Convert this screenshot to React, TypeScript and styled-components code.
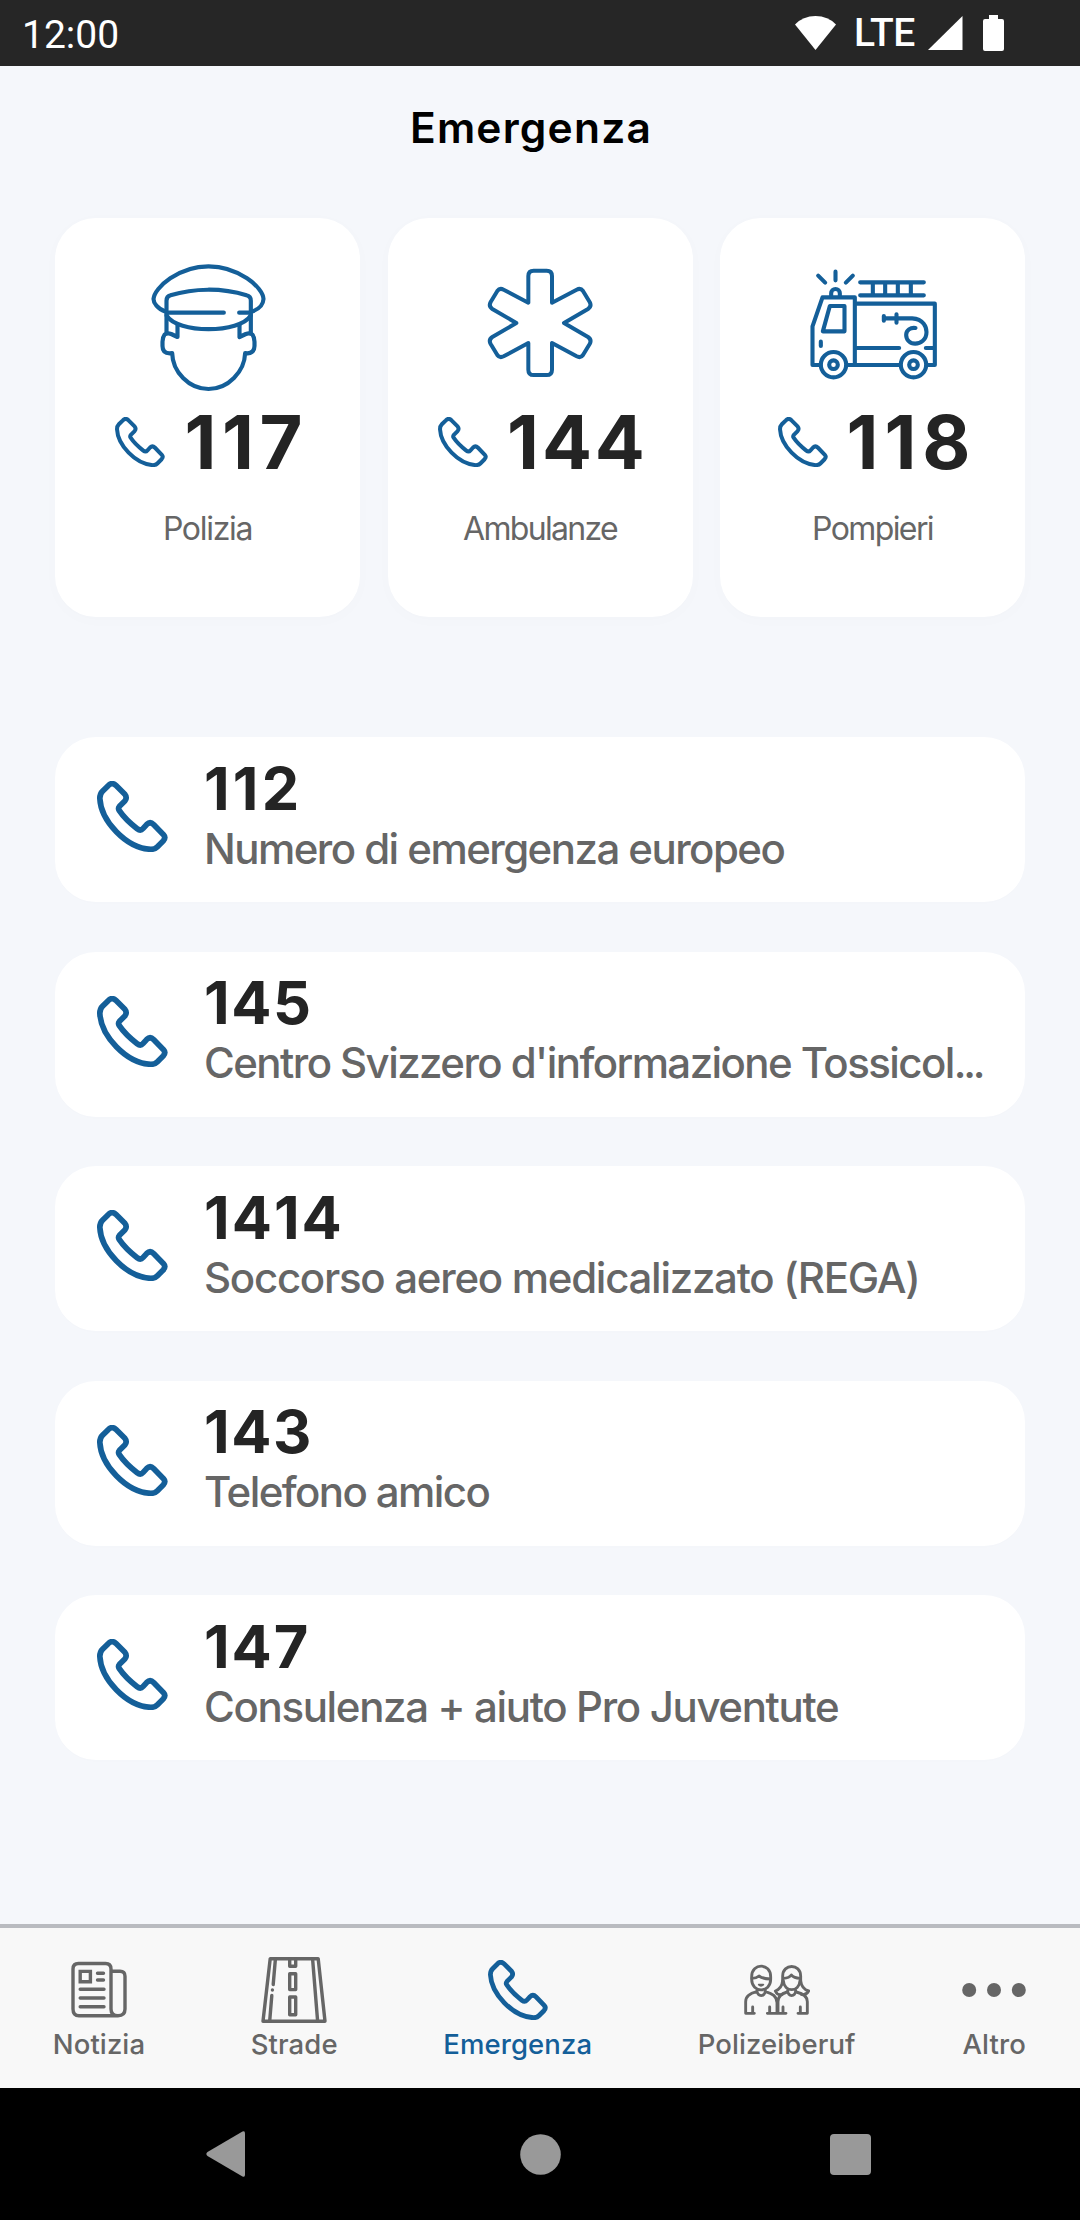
import React from "react";
import styled, { createGlobalStyle } from "styled-components";

const BLUE = "#145f99";
const GREY = "#666666";
const INK = "#242424";

const GlobalStyle = createGlobalStyle`
  * { box-sizing: border-box; }
  body { margin: 0; background: #f5f7fb; }
`;

const Screen = styled.div`
  width: 1080px;
  height: 2220px;
  display: flex;
  flex-direction: column;
  overflow: hidden;
  background: #f5f7fb;
  font-family: Inter, "Liberation Sans", sans-serif;
`;

const StatusBar = styled.div`
  height: 66px;
  flex: none;
  display: flex;
  align-items: center;
  justify-content: space-between;
  padding: 0 76px 0 22px;
  background: #262626;
  color: #fff;
  font: 400 39px/66px Roboto, sans-serif;
`;

const Clock = styled.span`
  padding-top: 3px;
`;

const StatusIcons = styled.div`
  display: flex;
  align-items: center;
`;

const NetworkType = styled.span`
  margin: 0 13px 0 18px;
  padding-bottom: 1px;
  font-weight: 500;
  letter-spacing: -0.4px;
`;

const BatterySvg = styled.svg`
  margin-left: 20px;
`;

const Header = styled.header`
  height: 123px;
  flex: none;
  display: flex;
  align-items: center;
  justify-content: center;
  padding-right: 18px;
`;

const Title = styled.h1`
  margin: 0;
  color: #000;
  font-size: 42.5px;
  font-weight: 600;
  line-height: 52px;
  letter-spacing: 1.2px;
`;

const Content = styled.main`
  flex: 1;
  padding: 29px 55px 0;
  display: flex;
  flex-direction: column;
  gap: 120px;
`;

const CardGrid = styled.div`
  display: grid;
  grid-template-columns: repeat(3, 1fr);
  gap: 27.5px;
`;

const Card = styled.div`
  height: 399px;
  padding-top: 46px;
  display: flex;
  flex-direction: column;
  align-items: center;
  border-radius: 41px;
  background: #fff;
  box-shadow: 0 3px 18px rgba(30, 30, 80, 0.015);
`;

const CardNumberRow = styled.div`
  height: 74px;
  margin-top: 13px;
  display: flex;
  align-items: center;
  gap: 19px;
`;

const CardNumber = styled.span<{ $tracking: number }>`
  color: ${INK};
  font-size: 74px;
  font-weight: 700;
  line-height: 74px;
  letter-spacing: ${(p) => p.$tracking}px;
  margin-right: ${(p) => -p.$tracking - 3}px;
`;

const CardLabel = styled.span<{ $tracking: number }>`
  margin-top: 30px;
  color: ${GREY};
  font-size: 32px;
  line-height: 40px;
  letter-spacing: ${(p) => p.$tracking}px;
`;

const List = styled.div`
  display: flex;
  flex-direction: column;
  gap: 49.5px;
`;

const Row = styled.div`
  height: 165px;
  padding: 20.5px 30px 0 42px;
  display: flex;
  gap: 36px;
  border-radius: 41px;
  background: #fff;
  box-shadow: 0 2px 14px rgba(30, 30, 80, 0.008);
`;

const RowIcon = styled.div`
  flex: none;
  padding-top: 23.5px;
`;

const RowText = styled.div`
  display: flex;
  flex-direction: column;
  gap: 6px;
  white-space: nowrap;
`;

const RowNumber = styled.span<{ $tracking: number }>`
  color: ${INK};
  font-size: 59.5px;
  font-weight: 700;
  font-kerning: none;
  line-height: 60px;
  letter-spacing: ${(p) => p.$tracking}px;
`;

const RowLabel = styled.span<{ $tracking: number }>`
  color: ${GREY};
  font-size: 42px;
  font-weight: 500;
  line-height: 50px;
  letter-spacing: ${(p) => p.$tracking}px;
`;

const Ellipsis = styled.span`
  letter-spacing: -3.2px;
`;

const TabBar = styled.nav`
  height: 164px;
  flex: none;
  display: flex;
  justify-content: space-around;
  padding-top: 29px;
  border-top: 4px solid #b9bbc0;
  background: #f8f8f8;
`;

const Tab = styled.div<{ $active?: boolean }>`
  display: flex;
  flex-direction: column;
  align-items: center;
  gap: 6px;
  color: ${(p) => (p.$active ? BLUE : GREY)};
`;

const TabIcon = styled.div`
  width: 66px;
  height: 66px;
  display: flex;
  align-items: center;
  justify-content: center;
`;

const TabLabel = styled.span`
  font-size: 27.5px;
  font-weight: 500;
  line-height: 30px;
  letter-spacing: 0.1px;
`;

const SystemNav = styled.div`
  height: 132px;
  flex: none;
  display: flex;
  align-items: center;
  justify-content: space-between;
  padding: 0 209px 0 206px;
  background: #000;
  color: #999;
`;

const PhoneIcon = ({ size, color = "currentColor" }: { size: number; color?: string }) => (
  <svg width={size} height={size} viewBox="172 183 212 213" fill="none" stroke={color} strokeWidth="17" strokeLinejoin="round">
    <path d="M205 197L188 214Q180 222 180 235C183 302 258 384 333 388Q345 388 352 381L370 363Q379 353 371 344L342 314Q331 303 321 313L310 325Q302 334 292 326C270 309 250 289 238 271Q234 265 239 259L255 243Q263 233 255 223L228 196Q216 185 205 197Z" />
  </svg>
);

const PoliceIcon = () => (
  <svg width="128" height="128" viewBox="310.5 192 384 384" fill="none" stroke={BLUE} strokeWidth="12.5" strokeLinecap="round" strokeLinejoin="round">
    <path d="M376 335C350 326 339 308 339 297C342 262 415 199 504 199C593 199 668 262 669 297C668 315 655 328 633 335" />
    <path d="M378 398V302Q378 289 390 286C460 264 545 263 618 286Q631 289 631 302V398" />
    <path d="M384 338H550M596 338H626" />
    <path d="M378 346C410 401 598 401 631 346" />
    <path d="M411 375V411L392 402Q380 398 372 404Q366 412 366 425V438Q366 460 388 460L395 459C396 515 445 567 504 567C563 567 612 515 614 459L621 460Q642 458 642 438V425Q642 412 636 404Q628 398 616 402L597 411V375" />
  </svg>
);

const AmbulanceIcon = () => (
  <svg width="128" height="128" viewBox="288 192 384 384" fill="none" stroke={BLUE} strokeWidth="12" strokeLinejoin="round">
    <path d="M445 308V228Q445 212 461 212H500Q516 212 516 228V308L590 269Q602 263 609 273L629 306Q636 319 624 327L552 369L624 411Q636 419 629 432L609 465Q602 475 590 469L516 429V509Q516 525 500 525H461Q445 525 445 509V429L371 469Q359 475 352 465L332 432Q325 419 337 411L409 369L337 327Q325 319 332 306L352 273Q359 263 371 269Z" />
  </svg>
);

const FireTruckIcon = () => (
  <svg width="128" height="128" viewBox="295.5 192 384 384" fill="none" stroke={BLUE} strokeWidth="12.3" strokeLinecap="round" strokeLinejoin="round">
    <path d="M330 495H306V379L336 292H433V493" />
    <path d="M358 318H402V394H337Z" />
    <path d="M362 287V280a13 13 0 0 1 26 0V287" />
    <path d="M375 215V241M323 227L344 248M427 227L406 248" />
    <path d="M331 425V438" />
    <path d="M449 247H640M449 286H640M487 247V286M524 247V286M562 247V286M601 247V286" />
    <path d="M439 311H673V495H652M411 495H568M439 444H566M646 444H667" />
    <circle cx="369" cy="494" r="38" />
    <circle cx="369" cy="494" r="13" />
    <circle cx="609" cy="494" r="38" />
    <circle cx="609" cy="494" r="13" />
    <path d="M520 348V362M558 343V368M520 355H605C640 357 648 382 648 396C648 420 630 431 614 431C598 431 587 419 587 405C587 390 600 382 615 384" />
  </svg>
);

const NewsIcon = () => (
  <svg width="66" height="66" viewBox="0 0 66 66" fill="none" stroke="currentColor" strokeWidth="3.4" strokeLinecap="round" strokeLinejoin="round">
    <path d="M45 14.3H54Q59 14.3 59 19.3V52Q59 58.7 52 58.7H13Q7 58.7 7 52V12Q7 6.5 12.5 6.5H39.5Q45 6.5 45 12V52Q45 58.7 52 58.7" />
    <path d="M14.2 14.4H24.4V24.8H14.2Z" strokeLinejoin="miter" />
    <path d="M31.5 16.3H37.5M31.5 23H37.5M14.2 32.3H38M14.2 41H38M14.2 49.7H38" />
  </svg>
);

const RoadIcon = () => (
  <svg width="66" height="66" viewBox="0 0 66 66" fill="none" stroke="currentColor" strokeWidth="3.4" strokeLinecap="round" strokeLinejoin="round">
    <path d="M9.2 1.8H57.2L64 64.3H2Z" />
    <path d="M14.4 2L12.2 27.5M11.4 33V33.1M10.8 38.5L8.7 64M51.6 2L56.6 64" />
    <path d="M28.7 2V9.3H34.7V2M28.7 16.8H34.7V32.6H28.7ZM28.7 40H34.7V57.8H28.7Z" />
  </svg>
);

const PeopleIcon = () => (
  <svg width="66" height="66" viewBox="72 51 198 198" fill="none" stroke="currentColor" strokeWidth="8.6" strokeLinecap="round" strokeLinejoin="round">
    <path d="M95 110C95 68 152 68 152 110V118C152 160 95 160 95 118Z" />
    <path d="M96 115Q109 115 117 108Q129 117 151 117" />
    <path d="M116 134Q123 141 130 134Z" strokeWidth="5" />
    <path d="M111 151C111 172 136 172 136 151M110 155C89 161 77 168 77 185V220H103M98 219V201M137 155C157 161 170 168 171 188V220M168 220H142M149 219V201" />
    <path d="M188 122V108C188 70 242 70 242 108V122M190 122C192 158 238 158 240 122" />
    <path d="M190 115Q208 114 214 105Q222 114 240 115" />
    <path d="M188 122C186 140 178 149 166 153Q172 167 186 163M242 122C244 140 252 149 266 153Q258 167 244 163" />
    <path d="M203 151C203 172 227 172 227 151M201 156C184 161 174 168 174 185V220H198M189 219V201M229 156C250 161 262 168 262 185V220H234M241 219V201" />
  </svg>
);

const MoreIcon = () => (
  <svg width="66" height="66" viewBox="0 0 66 66" fill="currentColor">
    <circle cx="8.2" cy="33" r="7" />
    <circle cx="33" cy="33" r="7" />
    <circle cx="57.8" cy="33" r="7" />
  </svg>
);

const cards = [
  { number: "117", tracking: 5.6, label: "Polizia", labelTracking: -1.3, icon: <PoliceIcon /> },
  { number: "144", tracking: 2.9, label: "Ambulanze", labelTracking: -1.7, icon: <AmbulanceIcon /> },
  { number: "118", tracking: 6, label: "Pompieri", labelTracking: -1.6, icon: <FireTruckIcon /> },
];

const contacts = [
  { number: "112", tracking: 3.2, label: "Numero di emergenza europeo", labelTracking: -1.55 },
  { number: "145", tracking: 1.6, label: "Centro Svizzero d'informazione Tossicol", labelTracking: -1.57, cut: true },
  { number: "1414", tracking: 2, label: "Soccorso aereo medicalizzato (REGA)", labelTracking: -1.28 },
  { number: "143", tracking: 1.6, label: "Telefono amico", labelTracking: -1.58 },
  { number: "147", tracking: 1.9, label: "Consulenza + aiuto Pro Juventute", labelTracking: -1.35 },
];

const tabs = [
  { label: "Notizia", icon: <NewsIcon /> },
  { label: "Strade", icon: <RoadIcon /> },
  { label: "Emergenza", icon: <PhoneIcon size={60} />, active: true },
  { label: "Polizeiberuf", icon: <PeopleIcon /> },
  { label: "Altro", icon: <MoreIcon /> },
];

export default function App() {
  return (
    <Screen>
      <GlobalStyle />
      <StatusBar>
        <Clock>12:00</Clock>
        <StatusIcons>
          <svg width="41" height="34" viewBox="0 0 41 34" fill="#fff">
            <path d="M20.5 34L0 8.5Q8 0 20.5 0T41 8.5Z" />
          </svg>
          <NetworkType>LTE</NetworkType>
          <svg width="35" height="34" viewBox="0 0 35 34" fill="#fff">
            <path d="M34.5 0V34H0Z" />
          </svg>
          <BatterySvg width="21" height="36" viewBox="0 0 21 36" fill="#fff">
            <path d="M6 0H15V4H19Q21 4 21 6V34Q21 36 19 36H2Q0 36 0 34V6Q0 4 2 4H6Z" />
          </BatterySvg>
        </StatusIcons>
      </StatusBar>
      <Header>
        <Title>Emergenza</Title>
      </Header>
      <Content>
        <CardGrid>
          {cards.map((c) => (
            <Card key={c.number}>
              {c.icon}
              <CardNumberRow>
                <PhoneIcon size={50} color={BLUE} />
                <CardNumber $tracking={c.tracking}>{c.number}</CardNumber>
              </CardNumberRow>
              <CardLabel $tracking={c.labelTracking}>{c.label}</CardLabel>
            </Card>
          ))}
        </CardGrid>
        <List>
          {contacts.map((c) => (
            <Row key={c.number}>
              <RowIcon>
                <PhoneIcon size={71} color={BLUE} />
              </RowIcon>
              <RowText>
                <RowNumber $tracking={c.tracking}>{c.number}</RowNumber>
                <RowLabel $tracking={c.labelTracking}>
                  {c.label}
                  {c.cut && <Ellipsis>...</Ellipsis>}
                </RowLabel>
              </RowText>
            </Row>
          ))}
        </List>
      </Content>
      <TabBar>
        {tabs.map((t) => (
          <Tab key={t.label} $active={t.active}>
            <TabIcon>{t.icon}</TabIcon>
            <TabLabel>{t.label}</TabLabel>
          </Tab>
        ))}
      </TabBar>
      <SystemNav>
        <svg width="44" height="46" viewBox="0 0 44 46" fill="currentColor">
          <path d="M36.5 0.6Q39 -0.6 39 2.5V43.5Q39 46.6 36.5 45.4L1.5 25Q-0.8 23 1.5 21Z" />
        </svg>
        <svg width="41" height="41" viewBox="0 0 41 41" fill="currentColor">
          <circle cx="20.5" cy="20.5" r="20.3" />
        </svg>
        <svg width="41" height="41" viewBox="0 0 41 41" fill="currentColor">
          <rect width="41" height="41" rx="4" />
        </svg>
      </SystemNav>
    </Screen>
  );
}
